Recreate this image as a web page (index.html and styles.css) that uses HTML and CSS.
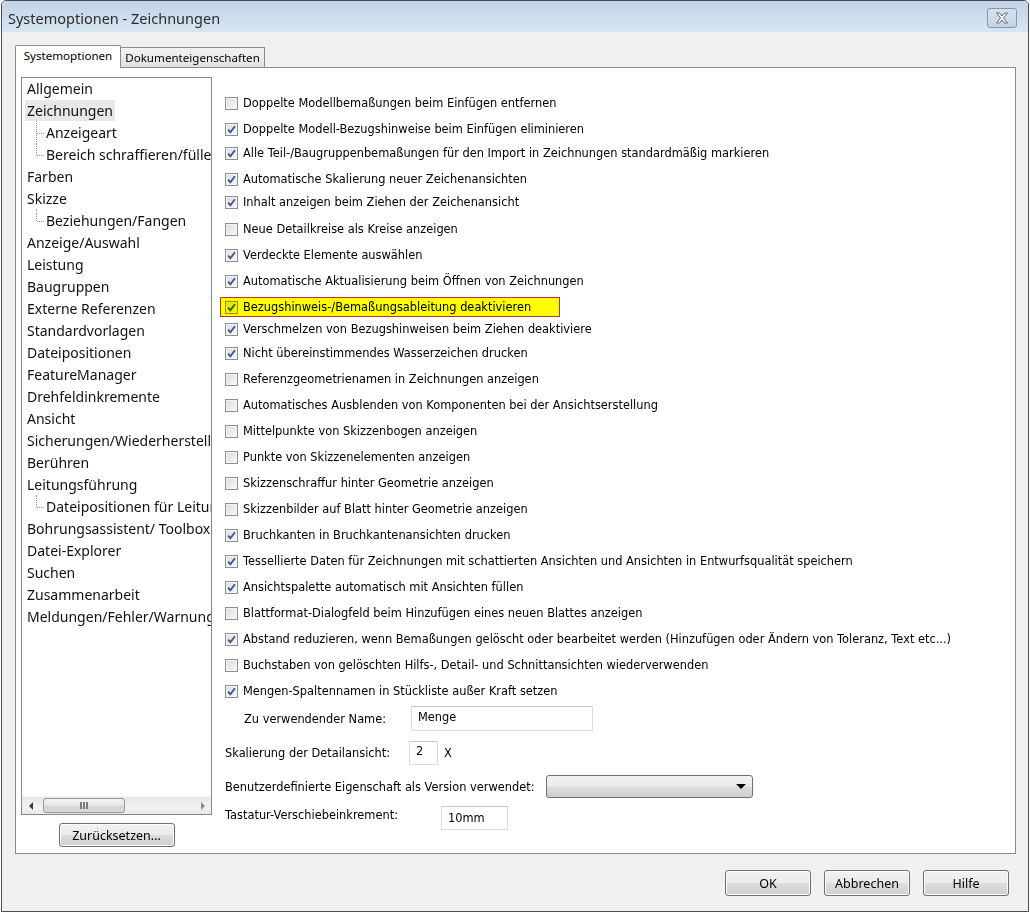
FILE: index.html
```
<!DOCTYPE html>
<html lang="de">
<head>
    <meta charset="UTF-8">
    <title>Systemoptionen - Zeichnungen</title>
    <link rel="stylesheet" href="styles.css">
</head>
<body>
    <div class="window">
        <div class="titlebar">
            <span class="title">Systemoptionen - Zeichnungen</span>
            <span class="close">
                <svg viewBox="0 0 16 14" width="16" height="14">
                    <path d="M2.5 2 L5.5 2 L8 5 L10.5 2 L13.5 2 L9.5 7 L13.5 12 L10.5 12 L8 9 L5.5 12 L2.5 12 L6.5 7 Z" fill="#fff" stroke="#5b6776" stroke-width="1" stroke-linejoin="round"/>
                </svg>
            </span>
        </div>

        <div class="client">
            <div class="tabs">
                <div class="tab active">Systemoptionen</div>
                <div class="tab">Dokumenteigenschaften</div>
            </div>

            <div class="panel">
                <div class="sidebar">
                    <div class="tree">
                        <ul class="tree-list">
                            <li>Allgemein</li>
                            <li><span class="selected">Zeichnungen</span></li>
                            <li class="child mid">Anzeigeart</li>
                            <li class="child">Bereich schraffieren/füllen</li>
                            <li>Farben</li>
                            <li>Skizze</li>
                            <li class="child">Beziehungen/Fangen</li>
                            <li>Anzeige/Auswahl</li>
                            <li>Leistung</li>
                            <li>Baugruppen</li>
                            <li>Externe Referenzen</li>
                            <li>Standardvorlagen</li>
                            <li>Dateipositionen</li>
                            <li>FeatureManager</li>
                            <li>Drehfeldinkremente</li>
                            <li>Ansicht</li>
                            <li>Sicherungen/Wiederherstellen</li>
                            <li>Berühren</li>
                            <li>Leitungsführung</li>
                            <li class="child">Dateipositionen für Leitungsführung</li>
                            <li>Bohrungsassistent/ Toolbox</li>
                            <li>Datei-Explorer</li>
                            <li>Suchen</li>
                            <li>Zusammenarbeit</li>
                            <li>Meldungen/Fehler/Warnungen</li>
                        </ul>
                        <div class="hscroll">
                            <span class="arrow left"></span>
                            <div class="track">
                                <div class="thumb"><span class="grip"></span></div>
                            </div>
                            <span class="arrow right"></span>
                        </div>
                    </div>
                    <button class="btn reset">Zurücksetzen...</button>
                </div>

                <div class="options">
                    <div class="opt"><span class="cb"></span><span class="txt">Doppelte Modellbemaßungen beim Einfügen entfernen</span></div>
                    <div class="opt"><span class="cb"><svg class="tick" viewBox="0 0 13 13"><path d="M3.2 6.6 L5.4 9.3 L9.9 3.2"/></svg></span><span class="txt">Doppelte Modell-Bezugshinweise beim Einfügen eliminieren</span></div>
                    <div class="opt up2"><span class="cb"><svg class="tick" viewBox="0 0 13 13"><path d="M3.2 6.6 L5.4 9.3 L9.9 3.2"/></svg></span><span class="txt">Alle Teil-/Baugruppenbemaßungen für den Import in Zeichnungen standardmäßig markieren</span></div>
                    <div class="opt"><span class="cb"><svg class="tick" viewBox="0 0 13 13"><path d="M3.2 6.6 L5.4 9.3 L9.9 3.2"/></svg></span><span class="txt">Automatische Skalierung neuer Zeichenansichten</span></div>
                    <div class="opt up3"><span class="cb"><svg class="tick" viewBox="0 0 13 13"><path d="M3.2 6.6 L5.4 9.3 L9.9 3.2"/></svg></span><span class="txt">Inhalt anzeigen beim Ziehen der Zeichenansicht</span></div>
                    <div class="opt down1"><span class="cb"></span><span class="txt">Neue Detailkreise als Kreise anzeigen</span></div>
                    <div class="opt"><span class="cb"><svg class="tick" viewBox="0 0 13 13"><path d="M3.2 6.6 L5.4 9.3 L9.9 3.2"/></svg></span><span class="txt">Verdeckte Elemente auswählen</span></div>
                    <div class="opt"><span class="cb"><svg class="tick" viewBox="0 0 13 13"><path d="M3.2 6.6 L5.4 9.3 L9.9 3.2"/></svg></span><span class="txt">Automatische Aktualisierung beim Öffnen von Zeichnungen</span></div>
                    <div class="opt"><span class="hl"><span class="cb"><svg class="tick" viewBox="0 0 13 13"><path d="M3.2 6.6 L5.4 9.3 L9.9 3.2"/></svg></span><span class="txt">Bezugshinweis-/Bemaßungsableitung deaktivieren</span></span></div>
                    <div class="opt up4"><span class="cb"><svg class="tick" viewBox="0 0 13 13"><path d="M3.2 6.6 L5.4 9.3 L9.9 3.2"/></svg></span><span class="txt">Verschmelzen von Bezugshinweisen beim Ziehen deaktiviere</span></div>
                    <div class="opt up2"><span class="cb"><svg class="tick" viewBox="0 0 13 13"><path d="M3.2 6.6 L5.4 9.3 L9.9 3.2"/></svg></span><span class="txt">Nicht übereinstimmendes Wasserzeichen drucken</span></div>
                    <div class="opt"><span class="cb"></span><span class="txt">Referenzgeometrienamen in Zeichnungen anzeigen</span></div>
                    <div class="opt"><span class="cb"></span><span class="txt">Automatisches Ausblenden von Komponenten bei der Ansichtserstellung</span></div>
                    <div class="opt"><span class="cb"></span><span class="txt">Mittelpunkte von Skizzenbogen anzeigen</span></div>
                    <div class="opt"><span class="cb"></span><span class="txt">Punkte von Skizzenelementen anzeigen</span></div>
                    <div class="opt"><span class="cb"></span><span class="txt">Skizzenschraffur hinter Geometrie anzeigen</span></div>
                    <div class="opt"><span class="cb"></span><span class="txt">Skizzenbilder auf Blatt hinter Geometrie anzeigen</span></div>
                    <div class="opt"><span class="cb"><svg class="tick" viewBox="0 0 13 13"><path d="M3.2 6.6 L5.4 9.3 L9.9 3.2"/></svg></span><span class="txt">Bruchkanten in Bruchkantenansichten drucken</span></div>
                    <div class="opt"><span class="cb"><svg class="tick" viewBox="0 0 13 13"><path d="M3.2 6.6 L5.4 9.3 L9.9 3.2"/></svg></span><span class="txt">Tessellierte Daten für Zeichnungen mit schattierten Ansichten und Ansichten in Entwurfsqualität speichern</span></div>
                    <div class="opt"><span class="cb"><svg class="tick" viewBox="0 0 13 13"><path d="M3.2 6.6 L5.4 9.3 L9.9 3.2"/></svg></span><span class="txt">Ansichtspalette automatisch mit Ansichten füllen</span></div>
                    <div class="opt"><span class="cb"></span><span class="txt">Blattformat-Dialogfeld beim Hinzufügen eines neuen Blattes anzeigen</span></div>
                    <div class="opt"><span class="cb"><svg class="tick" viewBox="0 0 13 13"><path d="M3.2 6.6 L5.4 9.3 L9.9 3.2"/></svg></span><span class="txt clip">Abstand reduzieren, wenn Bemaßungen gelöscht oder bearbeitet werden (Hinzufügen oder Ändern von Toleranz, Text etc...)</span></div>
                    <div class="opt"><span class="cb"></span><span class="txt">Buchstaben von gelöschten Hilfs-, Detail- und Schnittansichten wiederverwenden</span></div>
                    <div class="opt"><span class="cb"><svg class="tick" viewBox="0 0 13 13"><path d="M3.2 6.6 L5.4 9.3 L9.9 3.2"/></svg></span><span class="txt">Mengen-Spaltennamen in Stückliste außer Kraft setzen</span></div>

                    <div class="field name">
                        <span class="lbl">Zu verwendender Name:</span>
                        <span class="input">Menge</span>
                    </div>
                    <div class="field scale">
                        <span class="lbl">Skalierung der Detailansicht:</span>
                        <span class="input">2</span>
                        <span class="unit">X</span>
                    </div>
                    <div class="field version">
                        <span class="lbl">Benutzerdefinierte Eigenschaft als Version verwendet:</span>
                        <span class="combo"><span class="caret"></span></span>
                    </div>
                    <div class="field nudge">
                        <span class="lbl">Tastatur-Verschiebeinkrement:</span>
                        <span class="input">10mm</span>
                    </div>
                </div>
            </div>

            <div class="footer">
                <button class="btn">OK</button>
                <button class="btn">Abbrechen</button>
                <button class="btn">Hilfe</button>
            </div>
        </div>
    </div>
</body>
</html>
```

FILE: styles.css
```
* {
    box-sizing: border-box;
}

body {
    margin: 0 0 0 1px;
    background: #fff;
    font-family: "DejaVu Sans", sans-serif;
    font-size: 11.4px;
    color: #000;
}

.window {
    width: 1028px;
    height: 912px;
    border: 1px solid #4a4f57;
    border-radius: 5px 5px 0 0;
    background: #f0f0f0;
    display: flex;
    flex-direction: column;
    overflow: hidden;
}

/* title bar */

.titlebar {
    height: 31px;
    flex: none;
    display: flex;
    align-items: center;
    justify-content: space-between;
    padding: 0 11px 0 6px;
    background: linear-gradient(#c3d4e7, #d8e5f2);
}

.title {
    font-family: "Noto Sans", sans-serif;
    font-size: 14.5px;
    color: #2b2b2b;
    margin-top: 2px;
}

.close {
    width: 30px;
    height: 20px;
    margin-top: 3px;
    border: 1px solid #8597ad;
    border-radius: 3px;
    background: linear-gradient(#d7e2ee, #c4d3e3);
    display: flex;
    align-items: center;
    justify-content: center;
}

/* client area */

.client {
    flex: 1;
    display: flex;
    flex-direction: column;
    padding: 13px 12px 0 13px;
}

.tabs {
    display: flex;
    align-items: flex-end;
    height: 22px;
    font-family: "Noto Sans", sans-serif;
    font-size: 11.6px;
}

.tab {
    width: 144px;
    height: 20px;
    border: 1px solid #898c95;
    border-bottom: none;
    border-left: none;
    background: linear-gradient(#f2f2f2, #e2e2e2);
    text-align: center;
    line-height: 19px;
    color: #000;
}

.tab.active {
    width: 106px;
    height: 23px;
    margin-bottom: -1px;
    border-left: 1px solid #898c95;
    border-radius: 2px 2px 0 0;
    background: #fff;
    position: relative;
    z-index: 1;
    line-height: 20px;
}

.panel {
    height: 787px;
    background: #fff;
    border: 1px solid #898c95;
    display: flex;
}

/* left tree */

.sidebar {
    width: 196px;
    flex: none;
    padding: 9px 0 0 5px;
    display: flex;
    flex-direction: column;
    align-items: center;
}

.tree {
    width: 191px;
    height: 738px;
    border: 1px solid #828790;
    display: flex;
    flex-direction: column;
}

.tree-list {
    flex: 1;
    list-style: none;
    margin: 0;
    padding: 0;
    overflow: hidden;
    font-family: "Noto Sans", sans-serif;
    font-size: 14px;
    color: #111;
}

.tree-list li {
    height: 22px;
    line-height: 21px;
    padding-left: 5px;
    white-space: nowrap;
    position: relative;
}

.tree-list .selected {
    background: #e8e8e8;
    padding: 0 2px 0 2px;
    margin-left: -2px;
    display: inline-block;
    height: 21px;
}

.tree-list li.child {
    padding-left: 24px;
}

.tree-list li.child::before {
    content: "";
    position: absolute;
    left: 14px;
    top: -1px;
    height: 12px;
    border-left: 1px dotted #9a9a9a;
}

.tree-list li.child.mid::before {
    height: 23px;
}

.tree-list li.child::after {
    content: "";
    position: absolute;
    left: 15px;
    top: 11px;
    width: 7px;
    border-top: 1px dotted #9a9a9a;
}

.hscroll {
    height: 18px;
    flex: none;
    display: flex;
    align-items: center;
    background: linear-gradient(#e8e8e8, #f2f2f2 60%, #e8e8e8);
    border-top: 1px solid #f4f4f4;
}

.arrow {
    width: 17px;
    height: 17px;
    flex: none;
    display: flex;
    align-items: center;
    justify-content: center;
}

.arrow.left::before {
    content: "";
    border: 4px solid transparent;
    border-right: 4px solid #3a3a3a;
    border-left: none;
}

.arrow.right::before {
    content: "";
    border: 4px solid transparent;
    border-left: 4px solid #8a8a8a;
    border-right: none;
}

.track {
    flex: 1;
    height: 17px;
    padding: 1px 0;
}

.thumb {
    width: 82px;
    height: 15px;
    margin-left: 4px;
    border: 1px solid #979797;
    border-radius: 3px;
    background: linear-gradient(#f4f4f4, #e6e6e6 50%, #d6d6d6 51%, #d9d9d9);
    display: flex;
    align-items: center;
    justify-content: center;
}

.grip {
    width: 8px;
    height: 7px;
    border-left: 2px solid #7d7d7d;
    border-right: 2px solid #7d7d7d;
    position: relative;
}

.grip::after {
    content: "";
    position: absolute;
    left: 1px;
    top: 0;
    height: 7px;
    border-left: 2px solid #7d7d7d;
}

/* buttons */

.btn {
    font-family: "Noto Sans", sans-serif;
    font-size: 12.5px;
    color: #000;
    width: 86px;
    height: 26px;
    padding: 0;
    border: 1px solid #707070;
    border-radius: 3px;
    background: linear-gradient(#f2f2f2, #ebebeb 48%, #dddddd 52%, #cfcfcf);
    box-shadow: inset 0 0 0 1px #fcfcfc;
}

.btn.reset {
    width: 116px;
    height: 24px;
    margin-top: 8px;
}

/* options */

.options {
    flex: 1;
    padding: 22px 0 0 13px;
    overflow: hidden;
}

.opt {
    height: 26px;
    display: flex;
    align-items: center;
    white-space: nowrap;
}

.opt.up2 { margin-top: -2px; }
.opt.up3 { margin-top: -3px; }
.opt.up4 { margin-top: -4px; }
.opt.down1 { margin-top: 1px; }

.cb {
    width: 13px;
    height: 13px;
    flex: none;
    margin-right: 5px;
    border: 1px solid #8e8f8f;
    background: linear-gradient(135deg, #dcdcdc, #f8f8f8);
    box-shadow: inset 0 0 0 1px #f4f4f4;
    position: relative;
}

.tick {
    position: absolute;
    left: -1px;
    top: -1px;
    width: 13px;
    height: 13px;
    fill: none;
    stroke: #40588d;
    stroke-width: 1.9;
}

.txt.clip {
    max-width: 712px;
    overflow: hidden;
}

.hl {
    display: flex;
    align-items: center;
    height: 20px;
    margin-left: -5px;
    padding: 0 28px 0 4px;
    border: 1px solid #b3392e;
    position: relative;
}

.hl::after {
    content: "";
    position: absolute;
    inset: 0;
    background: #ffff00;
    mix-blend-mode: multiply;
}

/* fields */

.field {
    display: flex;
    align-items: center;
    white-space: nowrap;
}

.input {
    border: 1px solid #dcdcdc;
    border-top-color: #c8c8c8;
    background: #fff;
    padding-left: 6px;
}

.field.name {
    margin-top: 2px;
    padding-left: 19px;
}

.field.name .lbl { width: 167px; }
.field.name .input { width: 182px; height: 25px; line-height: 20px; }

.field.scale {
    margin-top: 10px;
}

.field.scale .lbl { width: 184px; }
.field.scale .input { width: 29px; height: 24px; line-height: 19px; }
.field.scale .unit { margin-left: 6px; }

.field.version {
    margin-top: 10px;
}

.field.version .lbl { width: 321px; }

.combo {
    width: 207px;
    height: 23px;
    border: 1px solid #707070;
    border-radius: 3px;
    background: linear-gradient(#f2f2f2, #ebebeb 48%, #dddddd 52%, #cfcfcf);
    display: flex;
    align-items: center;
    justify-content: flex-end;
    padding-right: 6px;
}

.caret {
    border: 5px solid transparent;
    border-top: 5px solid #000;
    border-bottom: none;
}

.field.nudge {
    margin-top: 8px;
    align-items: flex-start;
}

.field.nudge .lbl { width: 216px; margin-top: 2px; }
.field.nudge .input { width: 67px; height: 24px; line-height: 22px; }

/* footer */

.footer {
    display: flex;
    justify-content: flex-end;
    gap: 13px;
    padding: 16px 7px 0 0;
}
```
